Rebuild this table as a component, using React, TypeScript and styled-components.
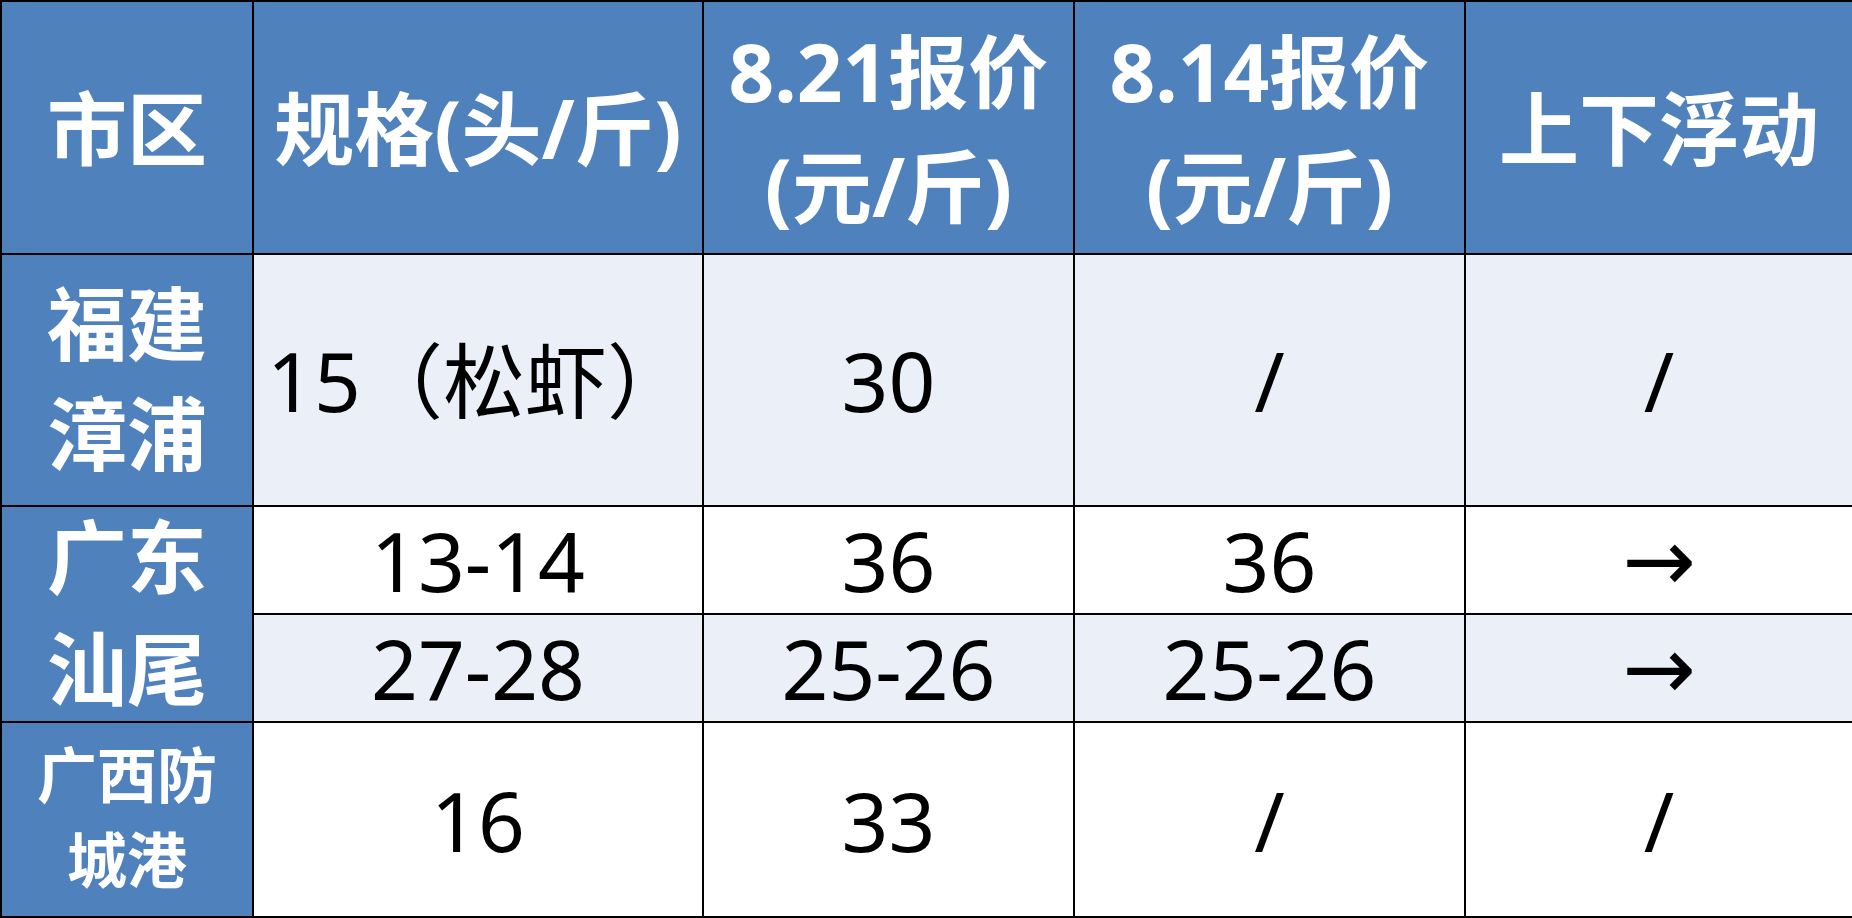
import * as React from "react";
import styled, { createGlobalStyle } from "styled-components";

const GlobalStyle = createGlobalStyle`
  html, body {
    margin: 0;
    padding: 0;
    background: #ffffff;
  }
`;

const Table = styled.table`
  width: 1852px;
  border-collapse: collapse;
  table-layout: fixed;
  font-family: "Noto Sans", "Noto Sans CJK SC", sans-serif;
`;

const Row = styled.tr<{ height: number }>`
  height: ${({ height }) => height}px;
`;

const HeadCell = styled.th`
  background: #4f81bd;
  color: #ffffff;
  border: 2px solid #000000;
  font-size: 80px;
  font-weight: 700;
  line-height: 115px;
  text-align: center;
  vertical-align: middle;
  padding: 0;
  white-space: nowrap;
`;

const RegionCell = styled.td`
  background: #4f81bd;
  color: #ffffff;
  border: 2px solid #000000;
  text-align: center;
  vertical-align: middle;
  padding: 0;
  white-space: nowrap;
`;

/* negative margin keeps the tall line pitch without stretching the rows */
const RegionName = styled.div<{ $size: number; $lineHeight: number }>`
  font-size: ${({ $size }) => $size}px;
  font-weight: 700;
  line-height: ${({ $lineHeight }) => $lineHeight}px;
  margin: -10px 0 -6px;
`;

const DataCell = styled.td<{ $shade?: boolean }>`
  background: ${({ $shade }) => ($shade ? "#ebf0f8" : "#ffffff")};
  color: #000000;
  border: 2px solid #000000;
  font-size: 82px;
  font-weight: 400;
  line-height: 90px;
  text-align: center;
  vertical-align: middle;
  padding: 0;
  white-space: nowrap;
`;

const Arrow = styled.span`
  font-family: "DejaVu Sans", sans-serif;
  font-weight: 400;
  font-size: 88px;
`;

const columns = [252, 450, 371, 391, 388];

type Item = { size: string; now: string; before: string; move: string };

const rows: {
  region: React.ReactNode;
  height: number;
  regionSize: number;
  regionLine: number;
  items: Item[];
}[] = [
  {
    region: <>福建<br />漳浦</>,
    height: 252,
    regionSize: 80,
    regionLine: 110,
    items: [{ size: "15（松虾）", now: "30", before: "/", move: "/" }],
  },
  {
    region: <>广东<br />汕尾</>,
    height: 108,
    regionSize: 80,
    regionLine: 112,
    items: [
      { size: "13-14", now: "36", before: "36", move: "→" },
      { size: "27-28", now: "25-26", before: "25-26", move: "→" },
    ],
  },
  {
    region: <>广西防<br />城港</>,
    height: 195,
    regionSize: 60,
    regionLine: 85,
    items: [{ size: "16", now: "33", before: "/", move: "/" }],
  },
];

export default function App() {
  let stripe = 0;
  return (
    <>
      <GlobalStyle />
      <Table>
        <colgroup>
          {columns.map((w, i) => (
            <col key={i} style={{ width: w }} />
          ))}
        </colgroup>
        <thead>
          <Row height={253}>
            <HeadCell>市区</HeadCell>
            <HeadCell>规格(头/斤)</HeadCell>
            <HeadCell>8.21报价<br />(元/斤)</HeadCell>
            <HeadCell>8.14报价<br />(元/斤)</HeadCell>
            <HeadCell>上下浮动</HeadCell>
          </Row>
        </thead>
        <tbody>
          {rows.map((group, gi) =>
            group.items.map((item, ii) => {
              const shade = stripe++ % 2 === 0;
              return (
                <Row key={`${gi}-${ii}`} height={group.height}>
                  {ii === 0 && (
                    <RegionCell rowSpan={group.items.length}>
                      <RegionName $size={group.regionSize} $lineHeight={group.regionLine}>
                        {group.region}
                      </RegionName>
                    </RegionCell>
                  )}
                  <DataCell $shade={shade}>{item.size}</DataCell>
                  <DataCell $shade={shade}>{item.now}</DataCell>
                  <DataCell $shade={shade}>{item.before}</DataCell>
                  <DataCell $shade={shade}>
                    {item.move === "→" ? <Arrow>→</Arrow> : item.move}
                  </DataCell>
                </Row>
              );
            })
          )}
        </tbody>
      </Table>
    </>
  );
}
